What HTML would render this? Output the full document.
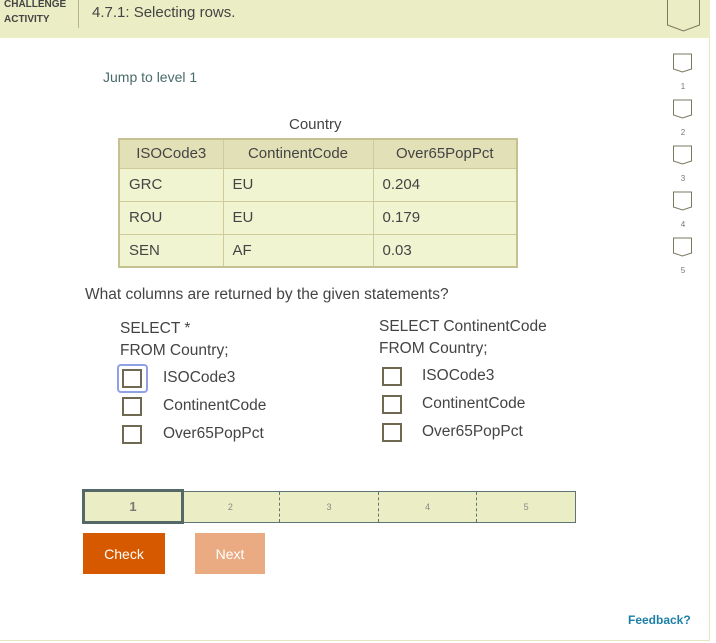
<!DOCTYPE html>
<html><head><meta charset="utf-8"><style>
*{box-sizing:border-box;margin:0;padding:0}
body{width:716px;height:643px;background:#fff;font-family:"Liberation Sans",sans-serif;position:relative;overflow:hidden;color:#333}
.abs{position:absolute}
.hdr{left:0;top:0;width:710px;height:38px;background:#ebeec4}
.frame{left:0;top:0;width:710px;height:641px;border-right:1px solid #e4e6c2;border-bottom:1px solid #e4e6c2}
.ca{left:4px;top:-3px;font-size:10px;font-weight:bold;line-height:15px;color:#444}
.sep{left:78px;top:0;width:1px;height:28px;background:#b9b48a}
.title{left:92px;top:4px;font-size:15px;color:#444}
table{border-collapse:collapse;font-size:15px;color:#444}
td,th{border:1px solid #cfcb9a;height:33px;padding-left:9px;text-align:left;font-weight:normal;background:#f1f4d1}
th{text-align:center;padding:0;background:#e2e0b7;height:29px}
.cb{width:20px;height:19px;border:2px solid #6f6952;background:#fff}
.lbl{font-size:15.5px;color:#444}
.lvl{left:82px;top:491px;width:494px;height:32px;border:1px solid #5f7474;background:#ebeec4;display:flex}
.lvl div{flex:1;font-size:9px;color:#888;display:flex;align-items:center;justify-content:center;border-left:1px dashed #5f7474}
.lvl div:first-child{border-left:none}
</style></head><body>
<div class="abs frame"></div>
<div class="abs hdr"></div>
<div class="abs ca">CHALLENGE<br>ACTIVITY</div>
<div class="abs sep"></div>
<div class="abs title">4.7.1: Selecting rows.</div>
<svg class="abs" style="left:666px;top:0" width="36" height="34"><path d="M1.5 0V25L17.5 31L33.5 25V0" fill="none" stroke="#7b7860" stroke-width="1"/></svg>
<div class="abs" style="left:103px;top:69px;font-size:14px;color:#4a6a6a">Jump to level 1</div>
<svg class="abs" style="left:672px;top:50px" width="22" height="230">
<g fill="none" stroke="#7b7860" stroke-width="1">
<path d="M1.5 4V19L10.5 22L19.5 19V4Z"/><path d="M1.5 50V65L10.5 68L19.5 65V50Z"/><path d="M1.5 96V111L10.5 114L19.5 111V96Z"/><path d="M1.5 142V157L10.5 160L19.5 157V142Z"/><path d="M1.5 188V203L10.5 206L19.5 203V188Z"/></g>
<g font-size="8" fill="#777" font-family="Liberation Sans" text-anchor="middle"><text x="11" y="39">1</text><text x="11" y="85">2</text><text x="11" y="131">3</text><text x="11" y="177">4</text><text x="11" y="223">5</text></g></svg>
<div class="abs" style="left:289px;top:116px;font-size:15px;color:#444">Country</div>
<table class="abs" style="left:118px;top:138px;width:400px;border:2px solid #c6c190">
<tr><th style="width:104px">ISOCode3</th><th style="width:150px">ContinentCode</th><th>Over65PopPct</th></tr>
<tr><td>GRC</td><td>EU</td><td>0.204</td></tr>
<tr><td>ROU</td><td>EU</td><td>0.179</td></tr>
<tr><td>SEN</td><td>AF</td><td>0.03</td></tr>
</table>
<div class="abs" style="left:85px;top:286px;font-size:15.5px;color:#444">What columns are returned by the given statements?</div>
<div class="abs lbl" style="left:120px;top:318px;line-height:22px">SELECT *<br>FROM Country;</div>
<div class="abs lbl" style="left:379px;top:316px;line-height:22px">SELECT ContinentCode<br>FROM Country;</div>
<div class="abs" style="left:117px;top:364px;width:31px;height:29px;border:2px solid #8fa0e6;border-radius:4px"></div>
<div class="abs cb" style="left:122px;top:369px"></div>
<div class="abs cb" style="left:122px;top:397px"></div>
<div class="abs cb" style="left:122px;top:425px"></div>
<div class="abs lbl" style="left:163px;top:369px">ISOCode3</div>
<div class="abs lbl" style="left:163px;top:397px">ContinentCode</div>
<div class="abs lbl" style="left:163px;top:425px">Over65PopPct</div>
<div class="abs cb" style="left:382px;top:367px"></div>
<div class="abs cb" style="left:382px;top:395px"></div>
<div class="abs cb" style="left:382px;top:423px"></div>
<div class="abs lbl" style="left:422px;top:367px">ISOCode3</div>
<div class="abs lbl" style="left:422px;top:395px">ContinentCode</div>
<div class="abs lbl" style="left:422px;top:423px">Over65PopPct</div>
<div class="abs lvl"><div></div><div>2</div><div>3</div><div>4</div><div>5</div></div>
<div class="abs" style="left:82px;top:489px;width:102px;height:35px;border:3px solid #556868;background:#ebeec4;font-size:13px;font-weight:bold;color:#777;display:flex;align-items:center;justify-content:center">1</div>
<div class="abs" style="left:83px;top:533px;width:82px;height:41px;background:#d65900;color:#fff;font-size:14px;display:flex;align-items:center;justify-content:center">Check</div>
<div class="abs" style="left:195px;top:533px;width:70px;height:41px;background:#ebab82;color:#fff;font-size:14px;display:flex;align-items:center;justify-content:center">Next</div>
<div class="abs" style="left:628px;top:613px;font-size:12px;font-weight:bold;color:#1c7fa6">Feedback?</div>
</body></html>
